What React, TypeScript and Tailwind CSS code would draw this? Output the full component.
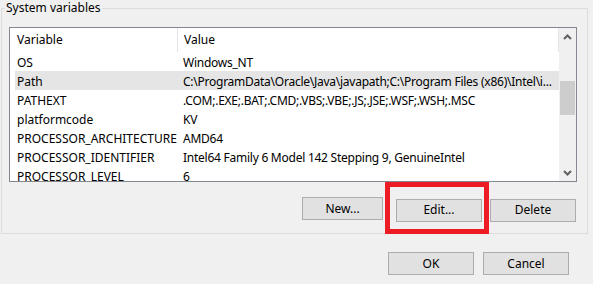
import React from "react";

const rows = [
  { name: "OS", value: "Windows_NT" },
  {
    name: "Path",
    value: "C:\\ProgramData\\Oracle\\Java\\javapath;C:\\Program Files (x86)\\Intel\\i...",
    selected: true,
  },
  { name: "PATHEXT", value: ".COM;.EXE;.BAT;.CMD;.VBS;.VBE;.JS;.JSE;.WSF;.WSH;.MSC" },
  { name: "platformcode", value: "KV" },
  { name: "PROCESSOR_ARCHITECTURE", value: "AMD64" },
  { name: "PROCESSOR_IDENTIFIER", value: "Intel64 Family 6 Model 142 Stepping 9, GenuineIntel" },
  { name: "PROCESSOR_LEVEL", value: "6" },
];

function WinButton({ label, width }: { label: string; width: string }) {
  return (
    <button
      type="button"
      className={`${width} h-[23px] border border-[#adadad] bg-[#e1e1e1] text-[12px] text-black leading-none`}
    >
      {label}
    </button>
  );
}

function Chevron({ up }: { up?: boolean }) {
  return (
    <svg width="9" height="6" viewBox="0 0 9 6">
      <polyline
        points={up ? "1,5 4.5,1.5 8,5" : "1,1 4.5,4.5 8,1"}
        fill="none"
        stroke="#606060"
        strokeWidth="2"
      />
    </svg>
  );
}

export default function App() {
  return (
    <div
      className="w-[593px] h-[284px] bg-[#f0f0f0] overflow-hidden text-black"
      style={{ fontFamily: '"Noto Sans", "Segoe UI", sans-serif' }}
    >
      <div className="pt-[8px] pl-[1px]">
        <div className="relative w-[587px] h-[226px] border border-[#dcdcdc] pl-[7px] pr-[10px] pt-[18px]">
          <span className="absolute left-[3px] -top-[9px] bg-[#f0f0f0] px-[1px] text-[12px] leading-[16px]">
            System variables
          </span>

          <div className="flex h-[155px] border border-[#828790] bg-white">
            <div className="flex-1 overflow-hidden">
              <div className="flex h-[24px] items-center text-[12px]">
                <div className="w-[168px] pl-[7px] h-full flex items-center border-r border-[#e5e5e5]">
                  Variable
                </div>
                <div className="flex-1 pl-[6px] h-full flex items-center border-r border-[#e5e5e5]">
                  Value
                </div>
              </div>
              {rows.map((r) => (
                <div
                  key={r.name}
                  className={`ml-[5px] flex h-[19px] items-center pt-[2px] text-[12px] leading-[17px] whitespace-nowrap ${
                    r.selected ? "bg-[#e5e5e5]" : ""
                  }`}
                >
                  <div className="w-[168px] pl-[2px]">{r.name}</div>
                  <div className="flex-1 overflow-hidden tracking-[-0.25px]">{r.value}</div>
                </div>
              ))}
            </div>
            <div className="w-[17px] flex flex-col bg-[#f0f0f0]">
              <div className="h-[17px] flex items-center justify-center">
                <Chevron up />
              </div>
              <div className="flex-1">
                <div className="mt-[36px] h-[34px] mx-[1px] bg-[#cdcdcd]" />
              </div>
              <div className="h-[17px] flex items-center justify-center">
                <Chevron />
              </div>
            </div>
          </div>

          <div className="mt-[14px] pr-[1px] flex justify-end items-center">
            <WinButton label="New..." width="w-[81px]" />
            <div className="relative ml-[13px]">
              <WinButton label="Edit..." width="w-[86px]" />
              <div className="absolute -left-[11px] -top-[14px] w-[104px] h-[52px] border-[5px] border-[#ed1c24]" />
            </div>
            <div className="ml-[8px]">
              <WinButton label="Delete" width="w-[86px]" />
            </div>
          </div>
        </div>
      </div>

      <div className="mt-[18px] pr-[24px] flex justify-end gap-[9px]">
        <WinButton label="OK" width="w-[86px]" />
        <WinButton label="Cancel" width="w-[86px]" />
      </div>
    </div>
  );
}
